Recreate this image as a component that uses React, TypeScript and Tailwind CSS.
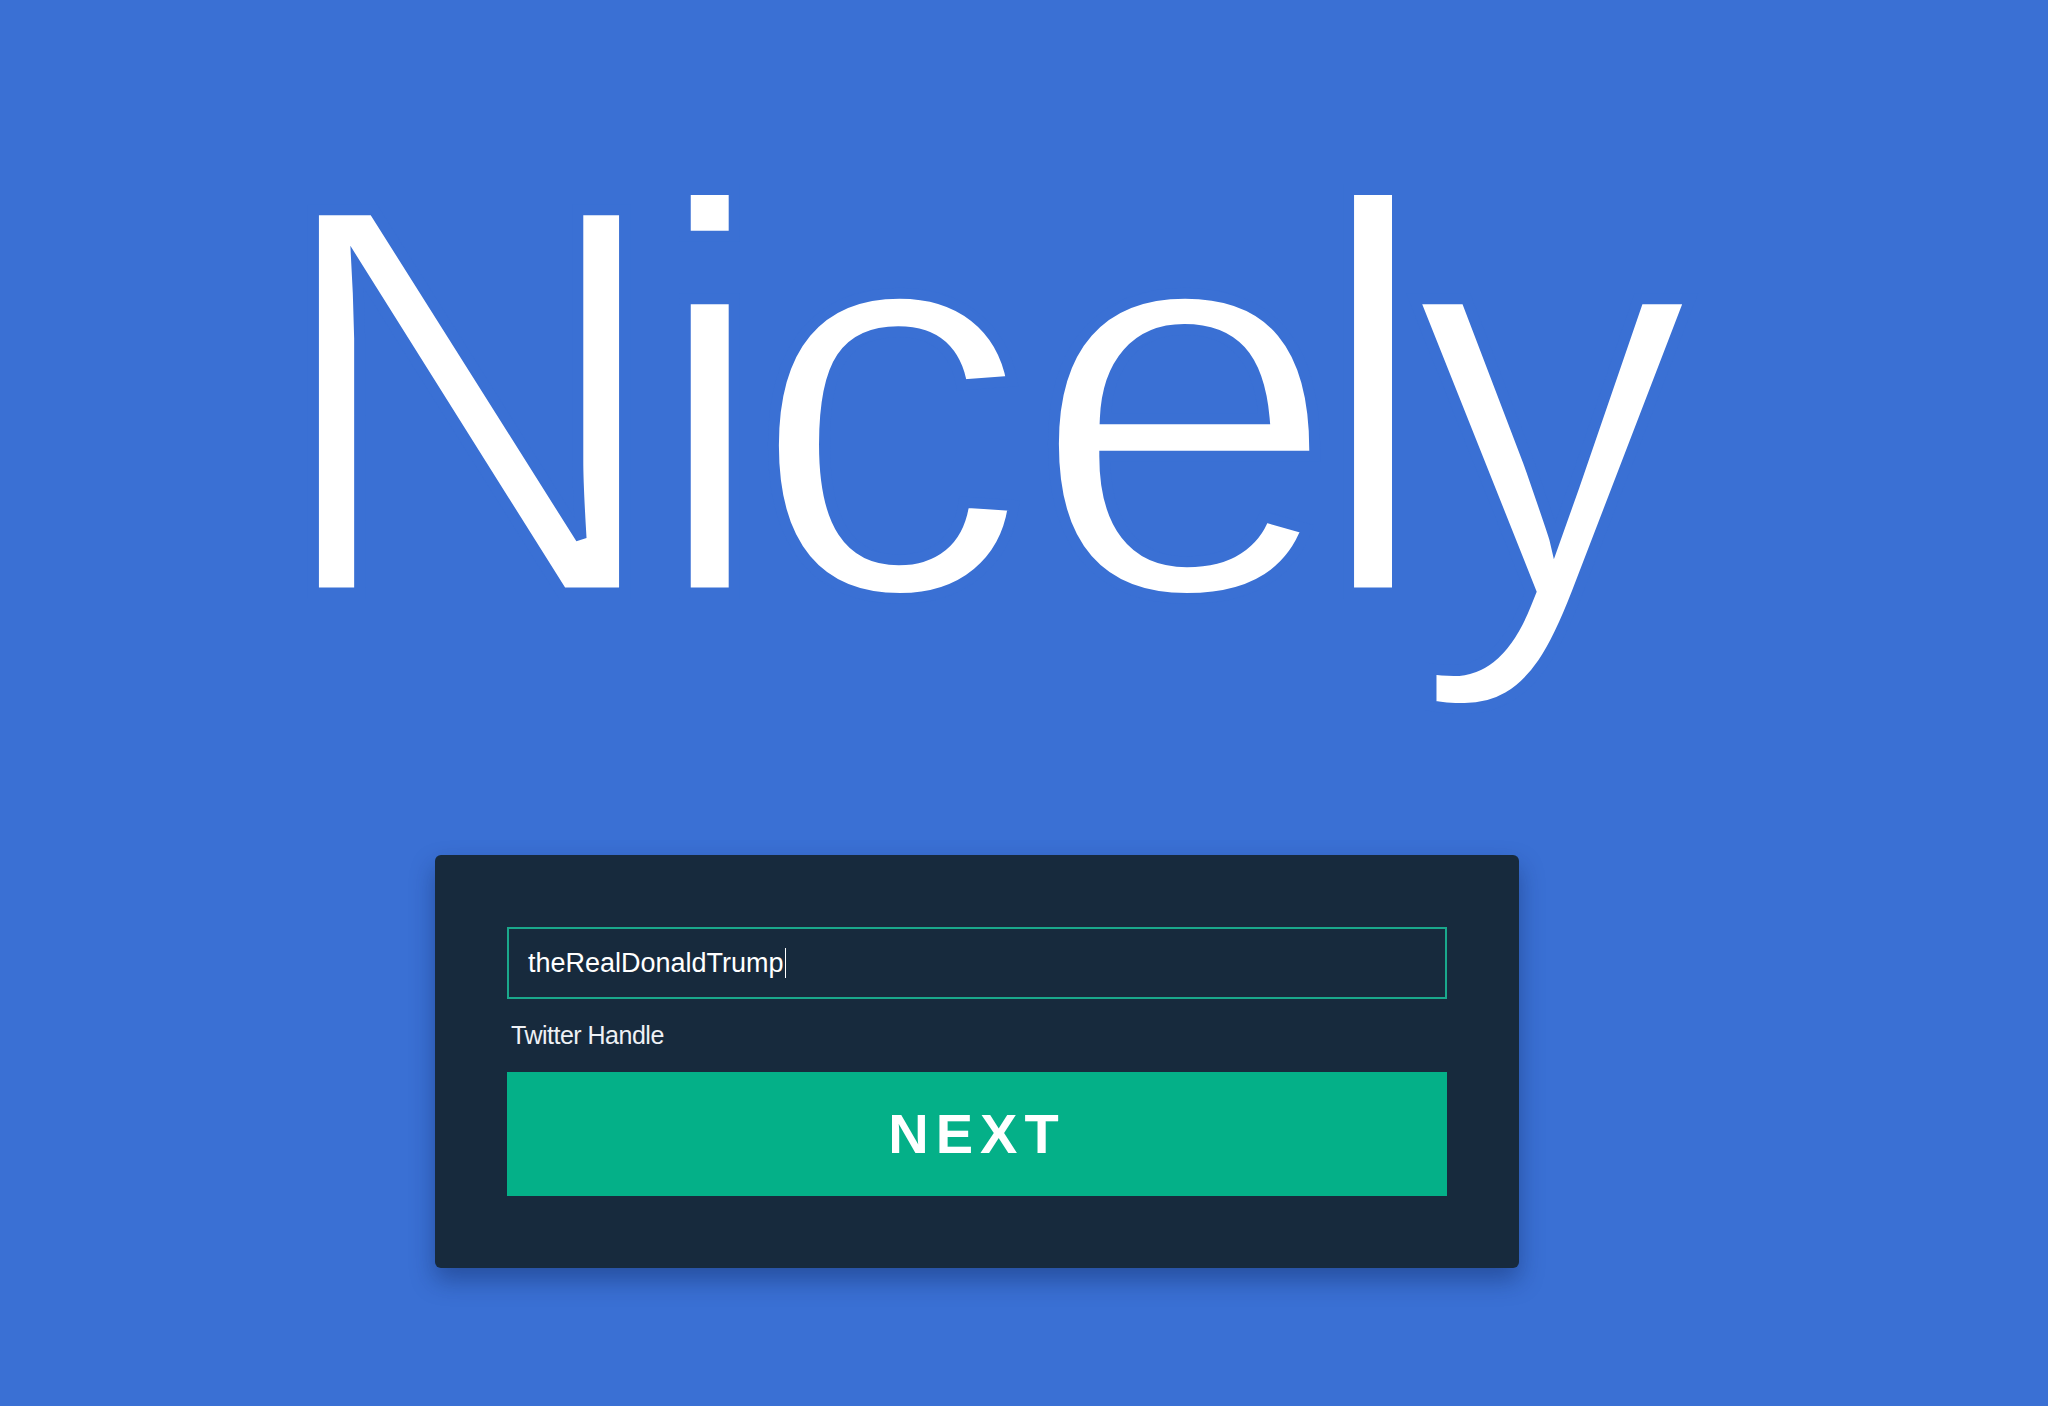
import React from "react"

export default function App() {
  return (
    <div className="min-h-screen w-full bg-[#3a70d4] font-['Liberation_Sans',Arial,sans-serif]">
      <div className="w-[1954px] flex flex-col items-center pt-[122px]">
        {/* Logo wordmark */}
        <h1 className="mr-[17px] h-[557px] text-[557px] leading-none tracking-[-22px] text-white [-webkit-text-stroke:11px_#3a70d4] select-none">
          Ni<span className="tracking-[1.5px]">c</span>
          <span className="tracking-[-28.5px]">e</span>ly
        </h1>

        {/* Handle form */}
        <div className="mt-[176px] w-[1084px] rounded-md bg-[#172a3d] p-[72px] shadow-[0_12px_24px_rgba(10,30,80,0.4)]">
          <div className="flex h-[72px] items-center border-2 border-[#1aa88c] pl-[19px] text-[27px] text-white">
            <span>theRealDonaldTrump</span>
            <span className="ml-px inline-block h-[30px] w-px bg-white" />
          </div>

          <div className="flex h-[73px] items-center pl-[4px] text-[25px] tracking-[-0.5px] text-[#eef1f5]">
            Twitter Handle
          </div>

          <button className="flex h-[124px] w-full items-center justify-center bg-[#04b088] text-[56px] font-bold tracking-[7px] text-white">
            NEXT
          </button>
        </div>
      </div>
    </div>
  )
}
